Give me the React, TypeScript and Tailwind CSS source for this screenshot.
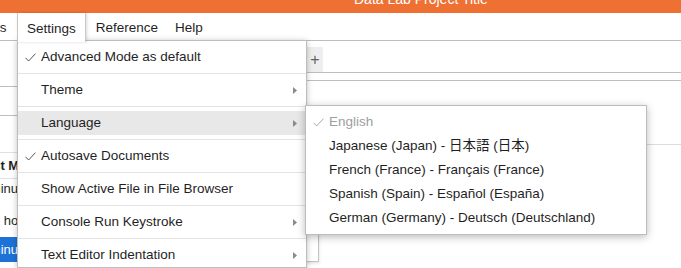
import React from 'react';

const Check = ({ className }: { className?: string }) => (
  <svg width="11" height="9" viewBox="0 0 11 9" className={className}>
    <path d="M0.5 4.8 L3.6 8 L10.5 0.6" fill="none" stroke="currentColor" strokeWidth="1" />
  </svg>
);

const Caret = () => (
  <svg width="4" height="7" viewBox="0 0 4 7" className="text-[#8a8a8a]">
    <path d="M0 0 L4 3.5 L0 7 Z" fill="currentColor" />
  </svg>
);

export default function App() {
  const menuItems = [
    { label: 'Advanced Mode as default', checked: true },
    { label: 'Theme', sub: true },
    { label: 'Language', sub: true, active: true },
    { label: 'Autosave Documents', checked: true },
    { label: 'Show Active File in File Browser' },
    { label: 'Console Run Keystroke', sub: true },
    { label: 'Text Editor Indentation', sub: true }
  ];

  const languages = [
    { label: 'English', checked: true, disabled: true },
    { label: 'Japanese (Japan) - 日本語 (日本)' },
    { label: 'French (France) - Français (France)' },
    { label: 'Spanish (Spain) - Español (España)' },
    { label: 'German (Germany) - Deutsch (Deutschland)' }
  ];

  return (
    <div className="relative w-[681px] h-[268px] overflow-hidden bg-white text-[#1f1f1f] font-['Liberation_Sans','Noto_Sans_CJK_JP',Arial,sans-serif] text-[13.5px]">
      {/* title bar */}
      <div className="h-[13px] overflow-hidden bg-[#ef7033]">
        <div className="-mt-[11px] pl-[354px] text-[14px] leading-[20px] text-white whitespace-nowrap">Data Lab Project Title</div>
      </div>

      {/* menu bar */}
      <div className="flex h-[28px] border-b border-[#bdbdbd] whitespace-nowrap">
        <div className="w-[17px] overflow-hidden flex items-center pt-[3px]">
          <span className="-ml-[22px]">Tabs</span>
        </div>
        <div className="relative z-20 flex items-center pt-[3px] h-[29px] px-[9px] bg-white border-x border-[#c8c8c8] shadow-[1px_0_3px_rgba(0,0,0,0.15)]">Settings</div>
        <div className="flex items-center pt-[3px] px-[10px]">Reference</div>
        <div className="flex items-center pt-[3px] pl-[7px]">Help</div>
      </div>

      {/* main area */}
      <div className="flex">
        <div className="w-[17px] overflow-hidden whitespace-nowrap text-[13px]">
          <div className="h-[46px] border-b border-[#bdbdbd]" />
          <div className="h-[29px] border-b border-[#bdbdbd]" />
          <div className="h-[37px] border-b border-[#e0e0e0]" />
          <div className="h-[26px] border-b border-[#e0e0e0] flex items-center font-bold">
            <span className="-ml-[22px]">Last Modified</span>
          </div>
          <div className="h-[20px] flex items-center">
            <span className="-ml-[21px]">1 minute ago</span>
          </div>
          <div className="h-[38px] flex items-center pt-[6px]">
            <span className="-ml-[7px]">2 hours ago</span>
          </div>
          <div className="h-[25px] flex items-center bg-[#1d72d8] text-white">
            <span className="-ml-[21px]">1 minute ago</span>
          </div>
        </div>

        <div className="flex-1 flex flex-col">
          <div className="h-[32px] border-b border-[#bdbdbd] pl-[290px] pt-[6px]">
            <div className="w-[16px] h-[25px] bg-[#eeeeee] flex items-center justify-center text-[#616161] text-[16px]">+</div>
          </div>
          <div className="h-[8px] border-b border-[#bdbdbd]" />
          <div className="flex">
            <div className="w-[302px]">
              <div className="ml-[150px] mt-[69px] h-[112px] border border-[#c4c4c4] shadow-[0_1px_3px_rgba(0,0,0,0.15)]" />
            </div>
            <div className="flex-1 mt-[63px] border-t border-[#dcdcdc]" />
          </div>
        </div>
      </div>

      {/* settings menu */}
      <div className="absolute z-10 left-[17px] top-[40px] w-[290px] bg-white border border-[#bdbdbd] pt-[4px] shadow-[0_1px_6px_rgba(0,0,0,0.25)]">
        {menuItems.map((item, i) => (
          <div key={item.label}>
            {i > 0 && <div className="my-[4px] h-px bg-[#e3e3e3]" />}
            <div className={`h-[24px] flex items-center pl-[7px] pr-[9px] whitespace-nowrap ${item.active ? 'bg-[#e8e8e8]' : ''}`}>
              <div className="w-[16px] flex items-center text-[#555]">{item.checked && <Check />}</div>
              <div className="flex-1">{item.label}</div>
              {item.sub && <Caret />}
            </div>
          </div>
        ))}
      </div>

      {/* language submenu */}
      <div className="absolute z-30 left-[305px] top-[105px] w-[342px] bg-white border border-[#bdbdbd] py-[4px] shadow-[0_2px_8px_rgba(0,0,0,0.28)]">
        {languages.map((lang) => (
          <div
            key={lang.label}
            className={`h-[24px] flex items-center pl-[7px] whitespace-nowrap ${lang.disabled ? 'text-[#9e9e9e]' : ''}`}
          >
            <div className="w-[16px] flex items-center text-[#a8a8a8]">{lang.checked && <Check />}</div>
            <div>{lang.label}</div>
          </div>
        ))}
      </div>
    </div>
  );
}
